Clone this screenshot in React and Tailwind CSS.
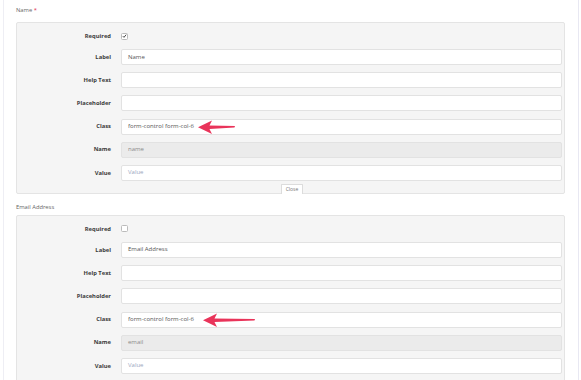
import React from "react";

function Arrow({ left, top, len }) {
  const L = len;
  return (
    <svg
      className="absolute"
      style={{ left, top }}
      width={L}
      height={14}
      viewBox={`0 0 ${L} 14`}
    >
      <polygon
        points={`0,7.2 14,0.5 11.5,5.6 ${L},5.9 ${L - 0.5},7.6 11.5,9 14,14`}
        fill="#e9345a"
      />
    </svg>
  );
}

function Row({ label, children }) {
  return (
    <div className="flex items-center h-[16px]">
      <div className="w-[94px] text-right text-[5.8px] font-bold text-[#3a3a3a]">{label}</div>
      <div className="ml-[10px] flex-1 h-full relative flex items-center">{children}</div>
    </div>
  );
}

function Input({ value, placeholder, disabled, children }) {
  return (
    <div
      className={`w-full h-full rounded-[2px] border border-[#e2e2e2] flex items-center pl-[6px] text-[6px] ${
        disabled ? "bg-[#ebebeb] text-[#8a8a8a]" : "bg-white text-[#555]"
      }`}
    >
      {value ? <span>{value}</span> : placeholder ? <span className="text-[#9aa6bd]">{placeholder}</span> : null}
      {children}
    </div>
  );
}

function Checkbox({ checked }) {
  return (
    <div className="w-[7px] h-[7px] rounded-[1.5px] border border-[#bbb] bg-white flex items-center justify-center">
      {checked && (
        <svg width="6" height="6" viewBox="0 0 6 6">
          <path d="M1 3.2 L2.4 4.6 L5 1.4" stroke="#333" strokeWidth="1.1" fill="none" />
        </svg>
      )}
    </div>
  );
}

function Panel({ name, checked, close, arrowTip, arrowLen }) {
  return (
    <div className="relative bg-[#f5f5f5] border border-[#e4e4e4] rounded-[2px] pr-[2px]">
      <div className="flex flex-col">
        <div className="flex items-center h-[12px] mt-[7px]">
          <div className="w-[94px] text-right text-[5.8px] font-bold text-[#3a3a3a]">Required</div>
          <div className="ml-[10px]">
            <Checkbox checked={checked} />
          </div>
        </div>
        <div className="flex flex-col gap-[7.2px] mt-[7px] mb-[12px]">
          <Row label="Label">
            <Input value={name === "name" ? "Name" : "Email Address"} />
          </Row>
          <Row label="Help Text">
            <Input />
          </Row>
          <Row label="Placeholder">
            <Input />
          </Row>
          <Row label="Class">
            <Input value="form-control form-col-6" />
            <Arrow left={arrowTip} top={1} len={arrowLen} />
          </Row>
          <Row label="Name">
            <Input value={name} disabled />
          </Row>
          <Row label="Value">
            <Input placeholder="Value" />
          </Row>
        </div>
      </div>
      {close && (
        <div className="absolute left-[264px] bottom-[-1px] h-[10px] w-[22px] bg-white border border-b-0 border-[#dcdcdc] rounded-t-[1px] flex items-center justify-center text-[5px] text-[#777]">
          Close
        </div>
      )}
    </div>
  );
}

export default function App() {
  return (
    <div
      className="w-[581px] h-[380px] bg-white overflow-hidden relative"
      style={{ fontFamily: '"Open Sans", "Liberation Sans", sans-serif' }}
    >
      <div className="absolute left-[3px] top-0 bottom-0 w-px bg-[#eeeef4]" />
      <div className="absolute left-[578px] top-0 bottom-0 w-px bg-[#e8e8f2]" />
      <div className="pl-[16px] pr-[16px] pt-[6px]">
        <div className="text-[5.8px] text-[#666] h-[8px] leading-[8px]">
          Name <span className="text-[#e0314f]">*</span>
        </div>
        <div className="mt-[8px]">
          <Panel name="name" checked close arrowTip={77} arrowLen={37} />
        </div>
        <div className="text-[5.8px] text-[#666] h-[8px] leading-[8px] mt-[9px]">Email Address</div>
        <div className="mt-[4px]">
          <Panel name="email" arrowTip={82} arrowLen={52} />
        </div>
      </div>
    </div>
  );
}
